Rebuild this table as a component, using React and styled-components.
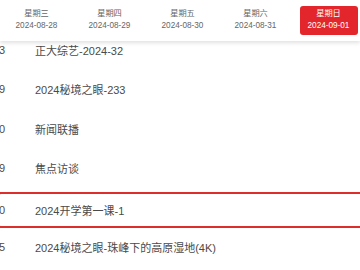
import React from "react";
import styled, { createGlobalStyle } from "styled-components";

const Global = createGlobalStyle`
  html, body { margin: 0; padding: 0; background: #fff; }
  body { width: 360px; height: 270px; overflow: hidden; font-family: "Noto Sans CJK SC", "Liberation Sans", sans-serif; }
`;

const Page = styled.div`
  width: 360px;
  height: 270px;
  overflow: hidden;
  background: #fff;
`;

const Header = styled.div`
  position: relative;
  z-index: 2;
  height: 41px;
  background: #fff;
  box-shadow: 0 2px 4px rgba(0, 0, 0, 0.12);
  display: grid;
  grid-template-columns: repeat(5, 73px);
  align-items: center;
`;

const Tab = styled.div`
  justify-self: center;
  width: 58px;
  height: 29px;
  margin-top: -1px;
  border-radius: 3px;
  display: flex;
  flex-direction: column;
  align-items: center;
  justify-content: center;
  background: ${(p) => (p.$active ? "#e3262b" : "transparent")};
  color: ${(p) => (p.$active ? "#fff" : "#666")};
  font-family: "Liberation Sans", "Noto Sans CJK SC", sans-serif;
  font-size: 8.2px;
  line-height: 12px;
`;

const List = styled.div`
  margin-top: -11px;
  margin-left: -20px;
`;

const Row = styled.div`
  display: grid;
  grid-template-columns: ${(p) => (p.$active ? "6px" : "25px")} 1fr;
  column-gap: 30px;
  align-items: center;
  box-sizing: border-box;
  height: ${(p) => (p.$active ? "36px" : "39.5px")};
  margin: ${(p) => (p.$active ? "3.5px -20px 0 17px" : "0")};
  border: ${(p) => (p.$active ? "2px solid #dc2f2c" : "0")};
  border-radius: 4px;
  font-family: "Liberation Sans", "Noto Sans CJK SC", sans-serif;
  font-size: 11px;
  color: #4a4a4a;
`;

const Num = styled.span`
  justify-self: end;
  white-space: nowrap;
`;

const Title = styled.span`
  white-space: nowrap;
`;

const days = [
  ["星期三", "2024-08-28"],
  ["星期四", "2024-08-29"],
  ["星期五", "2024-08-30"],
  ["星期六", "2024-08-31"],
  ["星期日", "2024-09-01"],
];

const rows = [
  ["3", "正大综艺-2024-32"],
  ["9", "2024秘境之眼-233"],
  ["0", "新闻联播"],
  ["9", "焦点访谈"],
  ["0", "2024开学第一课-1", true],
  ["5", "2024秘境之眼-珠峰下的高原湿地(4K)"],
];

export default function App() {
  return (
    <Page>
      <Global />
      <Header>
        {days.map(([w, d], i) => (
          <Tab key={d} $active={i === 4}>
            <span>{w}</span>
            <span>{d}</span>
          </Tab>
        ))}
      </Header>
      <List>
        {rows.map(([n, t, a]) => (
          <Row key={t} $active={a}>
            <Num>{n}</Num>
            <Title>{t}</Title>
          </Row>
        ))}
      </List>
    </Page>
  );
}
